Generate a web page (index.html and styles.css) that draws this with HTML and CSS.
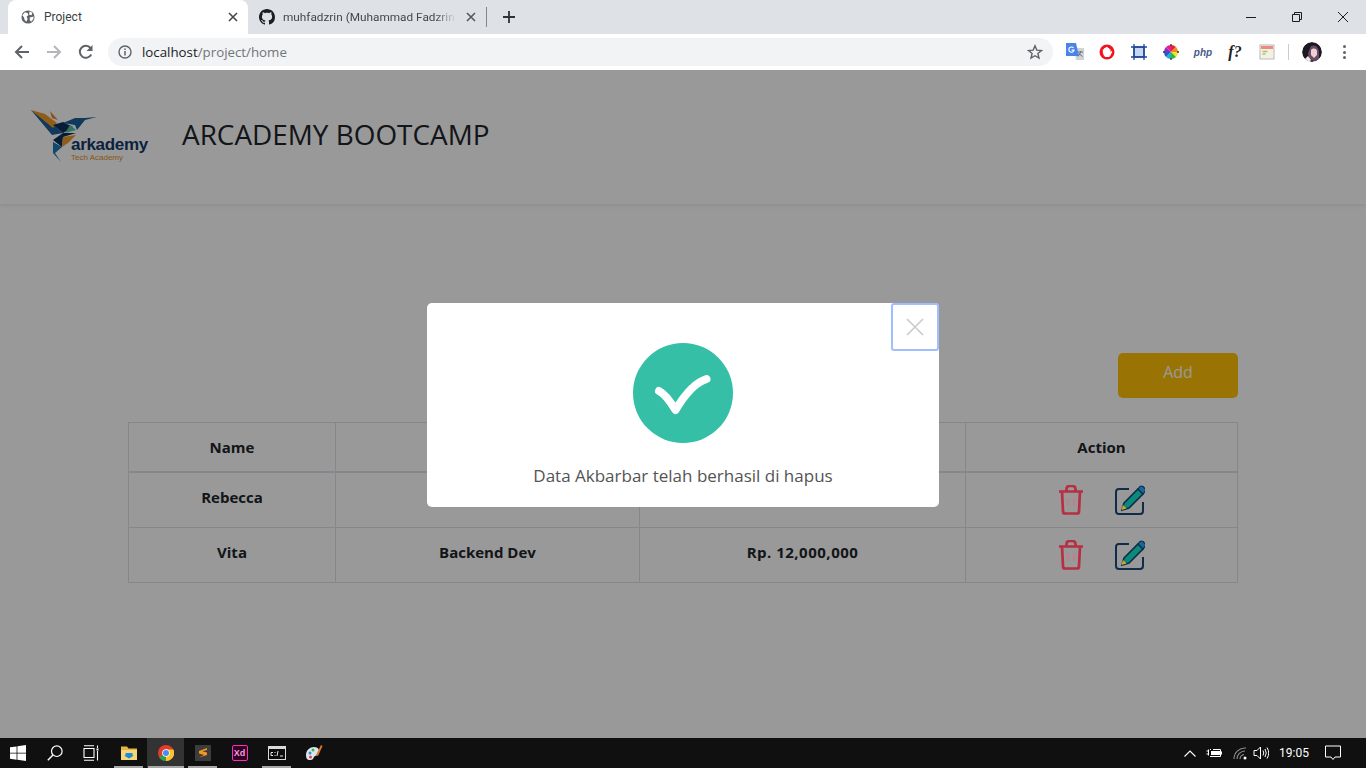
FILE: index.html
```html
<!DOCTYPE html>
<html lang="en">
<head>
<meta charset="utf-8">
<title>Project</title>
<link rel="stylesheet" href="styles.css">
</head>
<body>
<div class="window">
  <div class="tabstrip">
    <div class="tab tab-active">
      <svg class="favicon" viewBox="0 0 16 16"><circle cx="8" cy="8" r="7.500" fill="#5f6368"/><path d="M1.500 6l3-3.500 3 1 1 2.500-2 1.500 1 3-1.500 3-2-2.500-.5-2.500zM10 1.500l3 2-1 2.500-3-1zM10 8.500l4.500-1-.5 3-2.500 3-1.500-2z" fill="#fff"/></svg>
      <span class="tab-title">Project</span>
      <svg class="tab-close" viewBox="0 0 10 10"><path d="M1 1l8 8M9 1l-8 8" stroke="#45484c" stroke-width="1.600"/></svg>
    </div>
    <div class="tab tab-bg">
      <svg class="favicon favicon-gh" viewBox="0 0 16 16"><path fill="#1b1f23" d="M8 0C3.580 0 0 3.580 0 8c0 3.540 2.290 6.530 5.470 7.590.4.070.55-.17.55-.38 0-.19-.01-.82-.01-1.490-2.010.37-2.530-.49-2.690-.94-.09-.23-.48-.94-.82-1.130-.28-.15-.68-.52-.01-.53.63-.01 1.080.58 1.230.82.720 1.210 1.870.87 2.330.66.070-.52.280-.87.510-1.070-1.780-.2-3.640-.89-3.640-3.950 0-.87.310-1.590.820-2.150-.08-.2-.36-1.020.08-2.120 0 0 .67-.21 2.200.82.640-.18 1.320-.27 2-.27s1.360.09 2 .27c1.530-1.040 2.200-.82 2.200-.82.440 1.100.16 1.920.08 2.120.510.560.820 1.270.820 2.150 0 3.070-1.870 3.750-3.650 3.950.290.250.540.730.540 1.480 0 1.070-.01 1.930-.01 2.200 0 .21.150.46.550.38A8.010 8.010 0 0 0 16 8c0-4.420-3.580-8-8-8z"/></svg>
      <span class="tab-title tab-title-fade">muhfadzrin (Muhammad Fadzrin</span>
      <svg class="tab-close" viewBox="0 0 10 10"><path d="M1 1l8 8M9 1l-8 8" stroke="#55585c" stroke-width="1.600"/></svg>
    </div>
    <div class="tab-sep"></div>
    <svg class="new-tab" viewBox="0 0 12 12"><path d="M6 0v12M0 6h12" stroke="#303236" stroke-width="1.800"/></svg>
    <div class="win-controls">
      <div class="win-btn"><svg viewBox="0 0 12 12"><path d="M1 6.500h10" stroke="#1c1c1c"/></svg></div>
      <div class="win-btn"><svg viewBox="0 0 12 12"><path d="M1.500 3.500h7v7h-7zM3.500 3.500v-2h7v7h-2" fill="none" stroke="#1c1c1c"/></svg></div>
      <div class="win-btn"><svg viewBox="0 0 12 12"><path d="M1 1l10 10M11 1L1 11" stroke="#1c1c1c"/></svg></div>
    </div>
  </div>

  <div class="toolbar">
    <div class="nav-btn"><svg viewBox="0 0 16 16"><path d="M15 8H2M8 2L2 8l6 6" fill="none" stroke="#5f6368" stroke-width="2"/></svg></div>
    <div class="nav-btn"><svg viewBox="0 0 16 16"><path d="M1 8h13M8 2l6 6-6 6" fill="none" stroke="#b4b6b9" stroke-width="2"/></svg></div>
    <div class="nav-btn"><svg viewBox="0 0 16 16"><path d="M13.200 10.500A6 6 0 1 1 12.500 4" fill="none" stroke="#5f6368" stroke-width="2"/><path d="M14.500 1v6h-6z" fill="#5f6368"/></svg></div>
    <div class="omnibox">
      <svg class="info-icon" viewBox="0 0 14 14"><circle cx="7" cy="7" r="6" fill="none" stroke="#5f6368" stroke-width="1.400"/><path d="M7 6v4.500M7 3.500v1.500" stroke="#5f6368" stroke-width="1.500"/></svg>
      <span class="url"><span class="url-host">localhost</span>/project/home</span>
      <svg class="star" viewBox="0 0 16 16"><path d="M8 1.800l1.800 4.300 4.700.4-3.600 3 1.100 4.600L8 11.700l-4 2.400 1.100-4.600-3.600-3 4.700-.4z" fill="none" stroke="#5f6368" stroke-width="1.400"/></svg>
    </div>
    <div class="ext"><svg class="ext-lg" viewBox="0 0 18 18"><path d="M8 5h10v12H10z" fill="#cfd2d6"/><path d="M0 0h10l3 13H0z" fill="#4a84ea"/><path d="M7.500 5A2.600 2.600 0 1 0 8 7.200H5.500" fill="none" stroke="#fff" stroke-width="1.200"/><path d="M12 9h5M14.500 8v1.500l-2.500 4M13 10.500l3.500 3" stroke="#6b6f74" fill="none"/></svg></div>
    <div class="ext"><svg viewBox="0 0 16 16"><circle cx="8" cy="8" r="7.500" fill="#f4121d"/><path d="M3.800 8.500V5.200h1.300v-1.300h1.500V3h2.200v.9h1.400v1.300H11.500v3l.8-1.100 1 .5-1.800 3.900-1.500 1.500H6.200l-1.400-1.500z" fill="#fff"/></svg></div>
    <div class="ext"><svg viewBox="0 0 16 16"><rect x="3" y="3" width="10" height="10" fill="#c6d8f5" stroke="#1e4a93" stroke-width="1.500"/><path d="M3 0v16M13 0v16M0 3h16M0 13h16" stroke="#1e4a93" stroke-width="1.300"/></svg></div>
    <div class="ext"><svg viewBox="0 0 16 16"><path d="M8 8V1a7 7 0 0 1 5 2z" fill="#e8262a"/><path d="M8 8l5-5a7 7 0 0 1 2 5z" fill="#f08a1d"/><path d="M8 8h7a7 7 0 0 1-2 5z" fill="#f5e31c"/><path d="M8 8l5 5a7 7 0 0 1-5 2z" fill="#33b44a"/><path d="M8 8v7a7 7 0 0 1-5-2z" fill="#19b5c8"/><path d="M8 8l-5 5a7 7 0 0 1-2-5z" fill="#2a56d0"/><path d="M8 8H1a7 7 0 0 1 2-5z" fill="#8a2bc4"/><path d="M8 8L3 3a7 7 0 0 1 5-2z" fill="#e0209a"/><path d="M8 0v2M8 14v2M0 8h2M14 8h2" stroke="#333" stroke-width="1.300"/></svg></div>
    <div class="ext"><span class="ext-php">php</span></div>
    <div class="ext"><span class="ext-f">f?</span></div>
    <div class="ext"><svg viewBox="0 0 16 16"><rect x="1" y="1" width="14" height="14" fill="#f4f1e4" stroke="#b9b9b9"/><path d="M2 2h12v3H2z" fill="#ee8a80"/><path d="M3.500 7.500h5M3.500 10h3" stroke="#9ccc65" stroke-width="1.300"/></svg></div>
    <div class="toolbar-sep"></div>
    <div class="avatar"><svg viewBox="0 0 20 20"><circle cx="10" cy="10" r="10" fill="#1c1a20"/><path d="M9 4c5-2 8 2 8 7v6l-4 2-6-1-1-7z" fill="#6a4a68"/><path d="M9 8c2-2 5-2 6 1v4l-3 3-3-3z" fill="#eecfd2"/><path d="M3 17l3-3 3 4-2 2z" fill="#f1e8ea"/></svg></div>
    <div class="menu-dots"><i></i><i></i><i></i></div>
  </div>

  <main class="viewport">
    <header class="navbar">
      <div class="logo">
        <svg class="logo-bird" viewBox="0 0 70 55">
          <path d="M1 0l21 25 11-2-10-8z" fill="#1a5f9c"/>
          <path d="M1 0l14 4 12 9-4 5z" fill="#f09a26"/>
          <path d="M20 1l8 9-6-2z" fill="#e08a2a"/>
          <path d="M23 15l10 8 10-6-10-5z" fill="#0c2f5c"/>
          <path d="M33 13l12-5h10l12-1-12 3-8 10-2-5z" fill="#1a5f9c"/>
          <path d="M35 23l5-8 6 5z" fill="#4fc4a0"/>
          <path d="M23 30l10-7 13 0-13 4-1 10z" fill="#0c2f5c"/>
          <path d="M32 37l1-10 13-2-8 8z" fill="#f09a26"/>
          <path d="M23 32l9 5-7 6 6 9-8-9z" fill="#1f78b4"/>
        </svg>
        <div class="logo-text">
          <span class="logo-name">arkademy</span>
          <span class="logo-sub">Tech Academy</span>
        </div>
      </div>
      <h1 class="brand-title">ARCADEMY BOOTCAMP</h1>
    </header>

    <section class="content">
      <div class="actions"><button class="btn-add" type="button">Add</button></div>
      <table class="data-table">
        <colgroup><col class="col-name"><col class="col-pos"><col class="col-sal"><col class="col-act"></colgroup>
        <thead>
          <tr><th>Name</th><th></th><th></th><th>Action</th></tr>
        </thead>
        <tbody>
          <tr>
            <td class="cell-text">Rebecca</td><td></td><td></td>
            <td><div class="row-actions">
              <svg class="icon-del" viewBox="0 0 26 30"><path d="M1 6.500h24M4 6.500l1 20q.2 2 2 2h12q1.800 0 2-2l1-20M8.500 6V4q0-3 3-3h3q3 0 3 3v2" fill="none" stroke="#b72f42" stroke-width="2.700"/><path d="M10 13v8M16 13v8" stroke="#b9858a" stroke-width="2.700"/></svg>
              <svg class="icon-edit" viewBox="0 0 30 30"><path d="M14 4H4q-3 0-3 3v19q0 3 3 3h21q3 0 3-3v-9" fill="none" stroke="#102c4a" stroke-width="2"/><path d="M9 18L23 4l5 5-14 14-7 2z" fill="#0a8a78" stroke="#102c4a" stroke-width="1.600"/><path d="M23 4l2-2.500q1.500-1 3 0l2 2q1 1.500 0 3L28 9z" fill="#14689c" stroke="#102c4a" stroke-width="1.200"/><path d="M8 20l3.500 3.500-5 1.500z" fill="#d2a926"/></svg>
            </div></td>
          </tr>
          <tr>
            <td class="cell-text">Vita</td><td class="cell-text">Backend Dev</td><td class="cell-text cell-money">Rp. 12,000,000</td>
            <td><div class="row-actions">
              <svg class="icon-del" viewBox="0 0 26 30"><path d="M1 6.500h24M4 6.500l1 20q.2 2 2 2h12q1.800 0 2-2l1-20M8.500 6V4q0-3 3-3h3q3 0 3 3v2" fill="none" stroke="#b72f42" stroke-width="2.700"/><path d="M10 13v8M16 13v8" stroke="#b9858a" stroke-width="2.700"/></svg>
              <svg class="icon-edit" viewBox="0 0 30 30"><path d="M14 4H4q-3 0-3 3v19q0 3 3 3h21q3 0 3-3v-9" fill="none" stroke="#102c4a" stroke-width="2"/><path d="M9 18L23 4l5 5-14 14-7 2z" fill="#0a8a78" stroke="#102c4a" stroke-width="1.600"/><path d="M23 4l2-2.500q1.500-1 3 0l2 2q1 1.500 0 3L28 9z" fill="#14689c" stroke="#102c4a" stroke-width="1.200"/><path d="M8 20l3.500 3.500-5 1.500z" fill="#d2a926"/></svg>
            </div></td>
          </tr>
        </tbody>
      </table>
    </section>

    <div class="overlay">
      <div class="modal">
        <button class="modal-close" type="button" aria-label="Close"><svg viewBox="0 0 18 18"><path d="M1 1l16 16M17 1L1 17" stroke="#ccc" stroke-width="1.700"/></svg></button>
        <svg class="success-icon" viewBox="0 0 100 100"><circle cx="50" cy="50" r="50" fill="#34bfa6"/><path d="M26 48c6 3 11 10 16.500 19 6-10 18-27 31-31" fill="none" stroke="#fff" stroke-width="8" stroke-linecap="round" stroke-linejoin="round"/></svg>
        <p class="modal-text">Data Akbarbar telah berhasil di hapus</p>
      </div>
    </div>
  </main>

  <footer class="taskbar">
    <div class="tb-start"><svg viewBox="0 0 16 16"><path d="M0 2.300l6.600-.9v6.300H0zM7.400 1.300L16 0v7.700H7.400zM0 8.400h6.600v6.300L0 13.800zM7.400 8.400H16V16l-8.600-1.200z" fill="#fff"/></svg></div>
    <div class="tb-slot"><svg viewBox="0 0 16 16"><circle cx="9.800" cy="6.200" r="5.300" fill="none" stroke="#fff" stroke-width="1.200"/><path d="M6 10L.8 15.300" stroke="#fff" stroke-width="1.400"/></svg></div>
    <div class="tb-slot tb-view"><svg viewBox="0 0 16 16"><path d="M1 3.500h10v9H1zM1 .8h10M1 15.200h10M14.500 .5v2.500M14.500 6v9.500" fill="none" stroke="#fff" stroke-width="1.100"/><path d="M13.500 3.500h2v2h-2z" fill="#fff"/></svg></div>
    <div class="tb-slot tb-open"><svg viewBox="0 0 16 16"><path d="M0 1.500h6l1.500 2H16v2H0z" fill="#e8b63f"/><path d="M0 5h16v10H0z" fill="#f6d675"/><path d="M4.500 8h7v2.500h1.500L8 13.500l-5-3h1.500z" fill="#1d8bd8"/></svg></div>
    <div class="tb-slot tb-open tb-active"><svg viewBox="0 0 16 16"><circle cx="8" cy="8" r="8" fill="#e33b2e"/><path d="M8 8L1.100 12A8 8 0 0 0 8 16l3.500-1.500z" fill="#2f9e44"/><path d="M8 4.500h7.400A8 8 0 0 1 8 16z" fill="#f7c52c"/><circle cx="8" cy="8" r="3.800" fill="#fff"/><circle cx="8" cy="8" r="3" fill="#4a8bf0"/></svg></div>
    <div class="tb-slot tb-open"><svg viewBox="0 0 16 16"><rect width="16" height="16" fill="#3c3c3c"/><path d="M12 3L4 6v2.500l5 1.500-5 2.500 8-2.500V7.500L7.500 6.200 12 5z" fill="#f5971d"/></svg></div>
    <div class="tb-slot"><span class="tb-xd">Xd</span></div>
    <div class="tb-slot tb-open"><svg viewBox="0 0 18 14" class="tb-cmd"><rect width="18" height="14" fill="#d9d9d9"/><rect x="1" y="3" width="16" height="10" fill="#0c0c0c"/><path d="M3 6.500H5M3 9.500H5M3 6.500v3M7 6v1M7 9v1M10 5l-1 5M12 10h3" stroke="#e6e6e6" fill="none"/></svg></div>
    <div class="tb-slot"><svg class="tb-paint" viewBox="0 0 18 18"><path d="M1 11c0-5 4-8 8-8s6 3 5 6-4 2-5 4-1 3-4 3-4-2-4-5z" fill="#dce6ef"/><circle cx="5" cy="9" r="1.500" fill="#2e8bd8"/><circle cx="8" cy="6" r="1.500" fill="#35b558"/><circle cx="5.500" cy="13" r="1.500" fill="#e0483a"/><path d="M11 11l5-10 1.500 1L13 12z" fill="#d9772b"/></svg></div>
    <div class="tray">
      <svg class="tray-chevron" viewBox="0 0 12 7"><path d="M.5 6.500L6 1l5.500 5.500" fill="none" stroke="#fff" stroke-width="1.100"/></svg>
      <svg class="tray-battery" viewBox="0 0 16 10"><path d="M.5 3h2M.5 6h2M2.500 1.500v6" stroke="#fff" fill="none"/><path d="M4 1.500h1M4 8.500h10.500v-7H7" stroke="#fff" fill="none"/><rect x="5" y="3" width="9" height="4" fill="#fff"/><rect x="15" y="3.500" width="1" height="3" fill="#fff"/></svg>
      <svg class="tray-wifi" viewBox="0 0 14 14"><path d="M1 13A11 11 0 0 1 13 2M4 13A8 8 0 0 1 12 5M7 13a5 5 0 0 1 4-4.500" fill="none" stroke="#8d8d8d" stroke-width="1.100"/><circle cx="12" cy="12" r="1.500" fill="#fff"/></svg>
      <svg class="tray-volume" viewBox="0 0 16 14"><path d="M1 4.500h3l3.500-3.500v12L4 9.500H1z" fill="none" stroke="#fff"/><path d="M10 4.500q1.500 2.500 0 5M12 3q2.500 4 0 8M14 1.500q3.500 5.500 0 11" fill="none" stroke="#fff"/></svg>
      <span class="tray-time">19:05</span>
      <svg class="tray-note" viewBox="0 0 16 16"><path d="M.5 1h15v11H10l-2 2.500L6 12H.5z" fill="none" stroke="#fff"/></svg>
    </div>
  </footer>
</div>
</body>
</html>
```

FILE: styles.css
```css
* { box-sizing: border-box; }
html, body { margin: 0; padding: 0; height: 100%; overflow: hidden; }
body { font-family: "Open Sans", "Liberation Sans", sans-serif; color: #212529; }

.window { display: flex; flex-direction: column; width: 1366px; height: 768px; background: #fff; }

/* Tab strip */
.tabstrip { display: flex; align-items: center; height: 34px; padding-left: 8px; background: #dee1e6; flex: none; }
.tab { display: flex; align-items: center; height: 34px; font-family: Roboto, "Open Sans", sans-serif; font-size: 12px; }
.tab-active { width: 240px; padding: 0 10px 0 13px; background: #fff; border-radius: 8px 8px 0 0; color: #3c4043; }
.tab-bg { width: 238px; padding: 0 10px 0 11px; color: #45484c; }
.favicon { width: 14px; height: 14px; margin-right: 9px; flex: none; }
.favicon-gh { width: 16px; height: 16px; margin-right: 8px; }
.tab-title { flex: 1; white-space: nowrap; }
.tab-title-fade { -webkit-mask-image: linear-gradient(to right, #000 88%, transparent 100%); mask-image: linear-gradient(to right, #000 88%, transparent 100%); margin-right: 10px; font-size: 11.800px; }
.tab-close { width: 10px; height: 10px; flex: none; }
.tab-sep { width: 1px; height: 20px; background: #80868b; }
.new-tab { width: 12px; height: 12px; margin-left: 16px; }
.win-controls { display: flex; margin-left: auto; height: 34px; align-items: center; }
.win-btn { width: 46px; display: flex; justify-content: center; }
.win-btn svg { width: 12px; height: 12px; }

/* Toolbar */
.toolbar { display: flex; align-items: center; height: 36px; padding-left: 6px; background: #fff; flex: none; }
.nav-btn { width: 32px; display: flex; justify-content: center; }
.nav-btn svg { width: 16px; height: 16px; }
.omnibox { display: flex; align-items: center; width: 945px; height: 28px; margin-left: 6px; margin-right: 6px; padding: 0 10px; border-radius: 14px; background: #f1f3f4; }
.info-icon { width: 14px; height: 14px; margin-right: 10px; }
.url { font-size: 13.300px; color: #70757a; flex: 1; white-space: nowrap; }
.url-host { color: #202124; }
.star { width: 16px; height: 16px; }
.ext { display: flex; align-items: center; justify-content: center; width: 32px; height: 20px; flex: none; }
.ext svg { width: 16px; height: 16px; }
.ext .ext-lg { width: 18px; height: 18px; }
.ext-php { font: italic bold 10px "Liberation Sans", sans-serif; color: #4a5a8c; }
.ext-f { font: italic bold 16px "Liberation Serif", serif; color: #222; }
.toolbar-sep { width: 1px; height: 16px; margin: 0 13px 0 5px; background: #ccc; }
.avatar { width: 20px; height: 20px; border-radius: 50%; overflow: hidden; flex: none; }
.avatar svg { display: block; width: 20px; height: 20px; }
.menu-dots { display: flex; flex-direction: column; gap: 2.500px; margin-left: 21px; }
.menu-dots i { display: block; width: 3px; height: 3px; border-radius: 50%; background: #5f6368; }

/* Page */
.viewport { position: relative; flex: 1; overflow: hidden; background: #fff; }
.navbar { display: flex; align-items: flex-start; height: 134px; padding: 40px 0 0 30px; box-shadow: 0 1px 5px rgba(0, 0, 0, .1); background: #fff; }
.logo { position: relative; width: 152px; height: 54px; flex: none; }
.logo-bird { display: block; width: 70px; height: 55px; }
.logo-text { position: absolute; left: 41px; top: 26px; display: flex; flex-direction: column; }
.logo-name { font: bold 17px/17px "Liberation Sans", sans-serif; letter-spacing: -.3px; color: #123a6b; }
.logo-sub { font: 8px/9px "Liberation Sans", sans-serif; color: #e0922a; }
.brand-title { margin: 4px 0 0; font-size: 27.900px; line-height: 40px; font-weight: 400; color: #212529; }

.content { width: 1110px; margin: 149px auto 0; }
.actions { display: flex; justify-content: flex-end; margin-bottom: 24px; }
.btn-add { width: 120px; height: 45px; padding: 0 0 7px; border: 0; border-radius: 5px; background: #ffc107; color: #fff; font: 16px "Open Sans", sans-serif; }

.data-table { width: 1109px; table-layout: fixed; border-collapse: collapse; font-size: 15px; font-weight: 700; text-align: center; color: #212529; }
.col-name { width: 207px; }
.col-pos { width: 304px; }
.col-sal { width: 326px; }
.col-act { width: 272px; }
.data-table th, .data-table td { padding: 0; border: 1px solid #dee2e6; text-align: center; }
.data-table th { height: 49px; border-bottom-width: 2px; }
.data-table td { height: 55px; }
.data-table tbody tr:first-child td { height: 56px; }
.data-table .cell-text { padding-bottom: 6px; }
.data-table .cell-money { letter-spacing: .5px; }
.row-actions { position: relative; z-index: 1; display: flex; justify-content: center; align-items: center; gap: 31px; }
.icon-del { width: 26px; height: 30px; }
.icon-edit { width: 30px; height: 30px; }

/* Modal */
.overlay { position: absolute; inset: 0; display: flex; align-items: center; justify-content: center; padding-top: 2px; background: rgba(0, 0, 0, .4); }
.modal { position: relative; display: flex; flex-direction: column; align-items: center; width: 512px; height: 204px; padding-top: 40px; border-radius: 5px; background: #fff; }
.modal-close { position: absolute; top: 0; right: 0; display: flex; align-items: center; justify-content: center; width: 48px; height: 48px; padding: 0; border: 2px solid #a0bffc; border-radius: 3px; background: #fff; }
.modal-close svg { width: 18px; height: 18px; }
.success-icon { width: 100px; height: 100px; flex: none; }
.modal-text { margin: 20px 0 0; font-size: 17px; line-height: 26px; color: #545454; }

/* Taskbar */
.taskbar { display: flex; align-items: center; height: 30px; background: #101010; flex: none; }
.tb-start { width: 36px; height: 30px; display: flex; align-items: center; justify-content: center; }
.tb-start svg { width: 16px; height: 16px; }
.tb-slot { position: relative; width: 37px; height: 30px; display: flex; align-items: center; justify-content: center; flex: none; }
.tb-slot svg { width: 16px; height: 16px; }
.tb-slot .tb-cmd { width: 18px; height: 14px; }
.tb-slot .tb-paint { width: 18px; height: 18px; }
.tb-view { padding-right: 2px; }
.tb-open::after { content: ""; position: absolute; left: 4px; right: 4px; bottom: 0; height: 2px; background: #a8a8a8; }
.tb-active { background: #333; }
.tb-active::after { left: 1px; right: 0; }
.tb-xd { display: flex; align-items: center; justify-content: center; width: 16px; height: 16px; border: 1.500px solid #ff2bc2; border-radius: 2px; background: #2e001f; color: #ff9ae0; font: bold 9px "Liberation Sans", sans-serif; }
.tray { display: flex; align-items: center; margin-left: auto; height: 30px; padding-right: 25px; }
.tray-chevron { width: 12px; height: 7px; }
.tray-battery { width: 16px; height: 10px; margin-left: 10px; }
.tray-wifi { width: 14px; height: 14px; margin-left: 11px; }
.tray-volume { width: 16px; height: 14px; margin-left: 6px; }
.tray-time { width: 36px; margin-left: 7px; font-family: Roboto, "Open Sans", sans-serif; font-size: 12px; color: #fff; text-align: center; }
.tray-note { width: 16px; height: 16px; margin-left: 13px; }
```
